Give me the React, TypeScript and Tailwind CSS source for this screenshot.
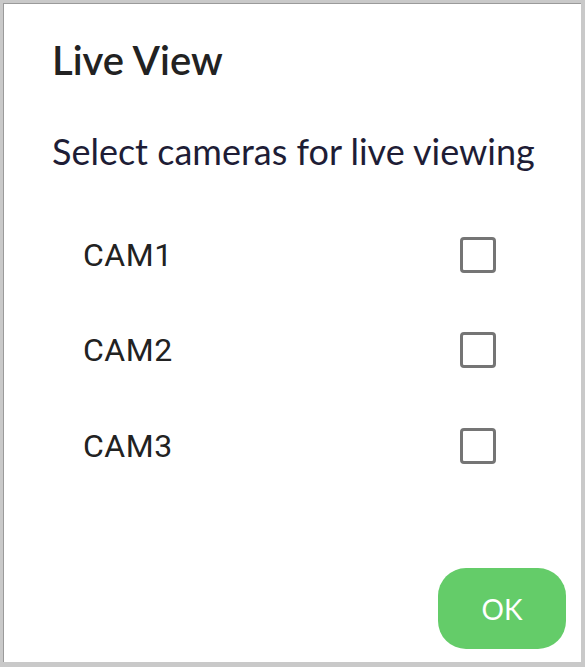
const cameras = ["CAM1", "CAM2", "CAM3"];

const CameraRow = ({ name }: { name: string }) => {
  return (
    <div className="flex items-center justify-between h-[95.5px] pl-[31px] pr-[85px]">
      <span className="text-[32px] text-[#222] font-['Roboto',sans-serif] tracking-[0.5px]">
        {name}
      </span>
      <div className="size-[36px] rounded-[4px] border-[3px] border-[#757575] bg-white" />
    </div>
  );
};

export default function App() {
  return (
    <div className="w-[585px] h-[667px] bg-[#c9c9c9] pl-[3px] pt-[3px] pr-[4px] pb-[5px]">
      <div className="flex flex-col h-full bg-white border-l border-t border-[#9a9a9a] pl-[48px] font-['Lato',sans-serif]">
        <h1 className="mt-[32px] text-[40px] leading-[48px] font-semibold text-[#222]">Live View</h1>
        <p className="mt-[45px] text-[36px] leading-[44px] text-[#1e1d36]">
          Select cameras for live viewing
        </p>
        <div className="mt-[34px] flex flex-col">
          {cameras.map((c) => (
            <CameraRow key={c} name={c} />
          ))}
        </div>
        <div className="mt-auto flex justify-end pr-[15px] pb-[13px]">
          <button className="w-[128px] h-[81px] rounded-[28px] bg-[#64cc69] text-white text-[28px]">
            OK
          </button>
        </div>
      </div>
    </div>
  );
}
